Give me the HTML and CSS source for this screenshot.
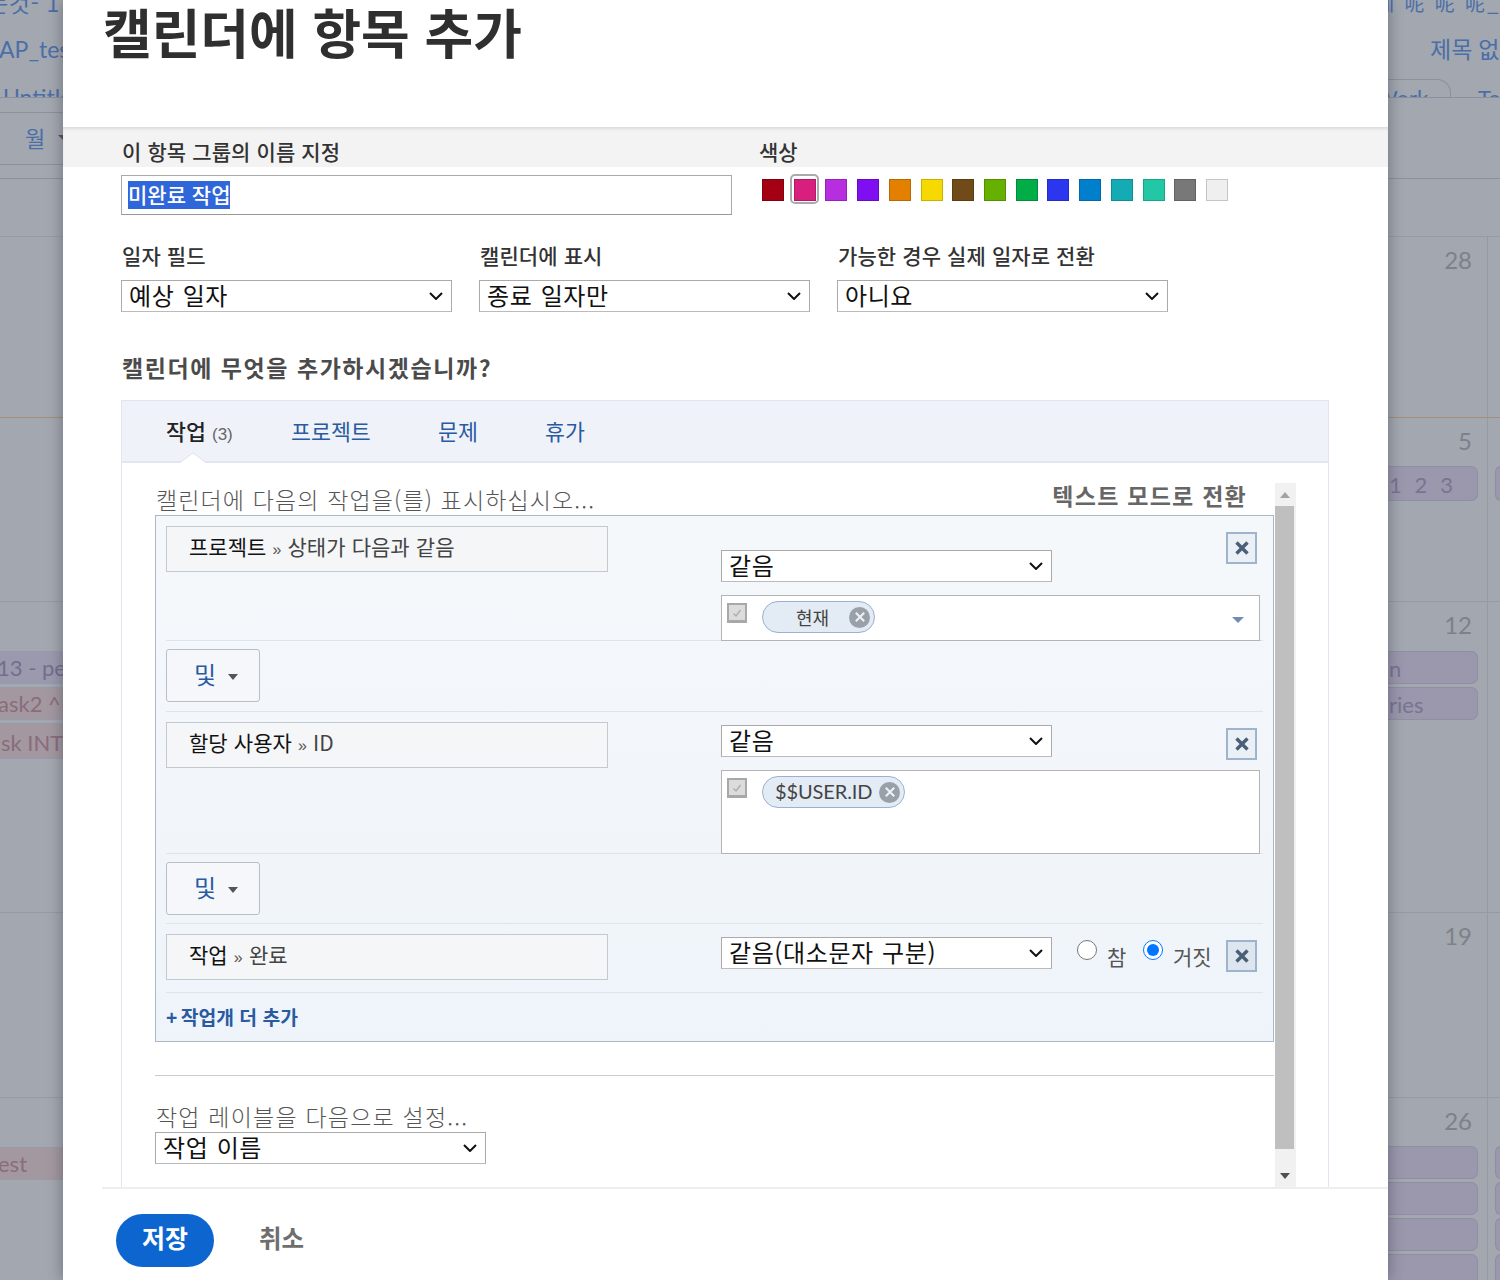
FILE: index.html
```html
<!DOCTYPE html>
<html lang="ko">
<head>
<meta charset="utf-8">
<title>캘린더에 항목 추가</title>
<link rel="stylesheet" href="styles.css">
</head>
<body>
<div class="page">
  <aside class="side side-left">
    <div class="bg-top">
      <div class="bg-link bg-l1">는것- 1</div>
      <div class="bg-link bg-l2">AP_test</div>
      <div class="bg-link bg-l3">Untitled</div>
    </div>
    <div class="bg-tool"><span class="bg-month">월</span><span class="bg-caret"></span></div>
    <div class="bg-strip"></div>
    <div class="bg-head"></div>
    <div class="week w1"></div>
    <div class="week w2"></div>
    <div class="week w3">
      <div class="wk-pad"></div>
      <div class="lpill purple">13 - pe</div>
      <div class="lpill pink">ask2 ^</div>
      <div class="lpill pink tall">sk INT</div>
    </div>
    <div class="week w4"></div>
    <div class="week w5">
      <div class="wk-pad"></div>
      <div class="lpill pink">est</div>
    </div>
  </aside>

  <main class="modal">
    <header class="modal-head"><h1 class="title">캘린더에 항목 추가</h1></header>

    <div class="band">
      <div class="band-name">이 항목 그룹의 이름 지정</div>
      <div class="band-color">색상</div>
    </div>

    <div class="name-row">
      <div class="name-input"><span class="selected-text">미완료 작업</span></div>
      <div class="swatches">
        <span class="swatch s1"></span>
        <span class="swatch s2 active"></span>
        <span class="swatch s3"></span>
        <span class="swatch s4"></span>
        <span class="swatch s5"></span>
        <span class="swatch s6"></span>
        <span class="swatch s7"></span>
        <span class="swatch s8"></span>
        <span class="swatch s9"></span>
        <span class="swatch s10"></span>
        <span class="swatch s11"></span>
        <span class="swatch s12"></span>
        <span class="swatch s13"></span>
        <span class="swatch s14"></span>
        <span class="swatch s15"></span>
      </div>
    </div>

    <div class="fields">
      <div class="field">
        <div class="field-label">일자 필드</div>
        <div class="select"><span>예상 일자</span><svg class="chev" viewBox="0 0 14 8"><path d="M1 1l6 6 6-6"/></svg></div>
      </div>
      <div class="field">
        <div class="field-label">캘린더에 표시</div>
        <div class="select"><span>종료 일자만</span><svg class="chev" viewBox="0 0 14 8"><path d="M1 1l6 6 6-6"/></svg></div>
      </div>
      <div class="field">
        <div class="field-label">가능한 경우 실제 일자로 전환</div>
        <div class="select"><span>아니요</span><svg class="chev" viewBox="0 0 14 8"><path d="M1 1l6 6 6-6"/></svg></div>
      </div>
    </div>

    <h2 class="question">캘린더에 무엇을 추가하시겠습니까?</h2>

    <section class="panel">
      <nav class="tabs">
        <span class="tab active">작업 <small>(3)</small></span>
        <a class="tab t2">프로젝트</a>
        <a class="tab t3">문제</a>
        <a class="tab t4">휴가</a>
        <svg class="notch" viewBox="0 0 26 11"><path d="M0 11L13 1l13 10z"/><path class="notch-line" d="M0 10.5L13 .8l13 9.7"/></svg>
      </nav>
      <div class="panel-body">
        <div class="scroll-content">
          <div class="intro">
            <span class="intro-text">캘린더에 다음의 작업을(를) 표시하십시오...</span>
            <a class="mode-link">텍스트 모드로 전환</a>
          </div>
          <div class="filter-box">
            <div class="cond">
              <div class="cond-name"><b>프로젝트</b> <i>»</i> 상태가 다음과 같음</div>
              <div class="cond-right">
                <div class="cond-top first">
                  <div class="select"><span>같음</span><svg class="chev" viewBox="0 0 14 8"><path d="M1 1l6 6 6-6"/></svg></div>
                  <button class="x-btn" type="button"><svg viewBox="0 0 16 16"><path d="M2.5 2.5l11 11M13.5 2.5l-11 11"/></svg></button>
                </div>
                <div class="multi">
                  <span class="check"><svg viewBox="0 0 12 12"><path d="M2.5 6.5l2.5 2.5 4.5-6"/></svg></span>
                  <span class="chip chip-wide">현재<span class="chip-x"><svg viewBox="0 0 10 10"><path d="M2 2l6 6M8 2L2 8"/></svg></span></span>
                  <span class="multi-caret"></span>
                </div>
              </div>
            </div>
            <div class="and-row"><button class="and-btn" type="button">및<span class="and-caret"></span></button></div>
            <div class="cond">
              <div class="cond-name"><b>할당 사용자</b> <i>»</i> ID</div>
              <div class="cond-right">
                <div class="cond-top">
                  <div class="select"><span>같음</span><svg class="chev" viewBox="0 0 14 8"><path d="M1 1l6 6 6-6"/></svg></div>
                  <button class="x-btn" type="button"><svg viewBox="0 0 16 16"><path d="M2.5 2.5l11 11M13.5 2.5l-11 11"/></svg></button>
                </div>
                <div class="multi multi-tall">
                  <span class="check"><svg viewBox="0 0 12 12"><path d="M2.5 6.5l2.5 2.5 4.5-6"/></svg></span>
                  <span class="chip chip-user"><span class="chip-label">$$USER.ID</span><span class="chip-x"><svg viewBox="0 0 10 10"><path d="M2 2l6 6M8 2L2 8"/></svg></span></span>
                </div>
              </div>
            </div>
            <div class="and-row and-second"><button class="and-btn" type="button">및<span class="and-caret"></span></button></div>
            <div class="cond cond-last">
              <div class="cond-name"><b>작업</b> <i>»</i> 완료</div>
              <div class="cond-right">
                <div class="cond-top">
                  <div class="select"><span>같음(대소문자 구분)</span><svg class="chev" viewBox="0 0 14 8"><path d="M1 1l6 6 6-6"/></svg></div>
                  <label class="radio r-true"><input type="radio" name="done"><span>참</span></label>
                  <label class="radio r-false"><input type="radio" name="done" checked><span>거짓</span></label>
                  <button class="x-btn x-filled" type="button"><svg viewBox="0 0 16 16"><path d="M2.5 2.5l11 11M13.5 2.5l-11 11"/></svg></button>
                </div>
              </div>
            </div>
            <div class="add-row"><a class="add-link"><span class="plus">+</span> 작업개 더 추가</a></div>
          </div>
          <div class="label-block">
            <div class="label-title">작업 레이블을 다음으로 설정...</div>
            <div class="select"><span>작업 이름</span><svg class="chev" viewBox="0 0 14 8"><path d="M1 1l6 6 6-6"/></svg></div>
          </div>
        </div>
        <div class="scrollbar">
          <span class="sb-btn"><span class="sb-up"></span></span>
          <span class="sb-thumb"></span>
          <span class="sb-btn sb-btn-down"><span class="sb-down"></span></span>
        </div>
      </div>
    </section>

    <footer class="modal-foot">
      <button class="save" type="button">저장</button>
      <a class="cancel">취소</a>
    </footer>
  </main>

  <aside class="side side-right">
    <div class="bg-top r">
      <div class="bg-link rl1">케 呢 呢 呢_</div>
      <div class="bg-link rl2">제목 없음</div>
      <div class="rtabs"><span class="rtab">Work</span><span class="rtab2">To</span></div>
    </div>
    <div class="r-tool"></div>
    <div class="bg-head"></div>
    <div class="week rw w1"><div class="day"><div class="num">28</div></div><div class="day2"></div></div>
    <div class="week rw w2"><div class="day"><div class="num first-pill">5</div><div class="rpill tall nums">1 2 3</div></div><div class="day2"><div class="num none first-pill"></div><div class="rpill2 tall"></div></div></div>
    <div class="week rw w3"><div class="day"><div class="num">12</div><div class="rpill">n</div><div class="rpill">ries</div></div><div class="day2"></div></div>
    <div class="week rw w4"><div class="day"><div class="num">19</div></div><div class="day2"></div></div>
    <div class="week rw w5"><div class="day"><div class="num first-pill">26</div><div class="rpill"></div><div class="rpill"></div><div class="rpill"></div><div class="rpill"></div></div><div class="day2"><div class="num none first-pill"></div><div class="rpill2"></div><div class="rpill2"></div><div class="rpill2"></div><div class="rpill2"></div></div></div>
  </aside>
</div>
</body>
</html>
```

FILE: styles.css
```css
* { box-sizing: border-box; }
html, body { margin: 0; padding: 0; }
body {
  width: 1500px;
  height: 1280px;
  overflow: hidden;
  font-family: "Noto Sans CJK KR", "Noto Sans", sans-serif;
  color: #333;
  background: #a3a7af;
}
button { font-family: inherit; }
.page { display: flex; width: 1500px; height: 1280px; overflow: hidden; }

/* dimmed page behind the dialog */
.side { flex: none; height: 1280px; overflow: hidden; background: #a3a7af; }
.side-left { width: 63px; }
.side-right { width: 112px; }
.bg-top { height: 113px; border-bottom: 1px solid #8b919c; overflow: hidden; }
.bg-link { white-space: nowrap; color: #4a6ea8; font-size: 23px; font-family: "Lato", "Noto Sans CJK KR", sans-serif; }
.bg-l1 { height: 22px; margin-top: -9px; line-height: 22px; margin-left: -13px; width: 80px; letter-spacing: .7px; font-family: "Noto Sans CJK KR", sans-serif; }
.bg-l2 { height: 34px; margin-top: 19px; line-height: 34px; margin-left: -1px; }
.bg-l3 { margin-top: 13px; line-height: 36px; height: 19px; overflow: hidden; padding-left: 3px; border-bottom: 1px solid #8b919c; }
.bg-tool { height: 52px; border-bottom: 1px solid #8b919c; display: flex; align-items: center; padding: 0 0 4px 25px; color: #4a6ea8; font-size: 22px; }
.bg-month { width: 33px; flex: none; }
.bg-caret { flex: none; width: 0; height: 0; border: 5px solid transparent; border-top-color: #555; margin-top: 6px; }
.bg-strip { height: 14px; border-bottom: 1px solid #8b919c; }
.bg-head { height: 58px; border-bottom: 1px solid #979ba5; }
.r-tool { height: 81px; border-bottom: 1px solid #8b919c; }
.week { border-bottom: 1px solid #969aa3; overflow: hidden; }
.week.w1 { height: 181px; border-bottom: 1px solid #a58d77; }
.w2 { height: 184px; }
.w3 { height: 311px; }
.w4 { height: 185px; }
.w5 { height: 183px; border-bottom: 0; }
.wk-pad { height: 49px; }
.lpill { height: 33px; margin-bottom: 3px; border-top: 1px solid #979aab; border-bottom: 1px solid #979aab; font-size: 22px; line-height: 31px; white-space: nowrap; overflow: hidden; font-family: "Lato", sans-serif; }
.lpill.purple { background: #9b99ae; color: #716f8c; text-indent: -3px; }
.lpill.pink { background: #a3989f; color: #8a6c7c; text-indent: -2px; }
.lpill.tall { height: 36px; margin-top: 2px; line-height: 37px; text-indent: 1px; }

.side-right .bg-top { height: 98px; }
.rl1 { height: 22px; margin-top: -8px; line-height: 22px; font-size: 20px; letter-spacing: 2.3px; text-indent: -12px; font-family: "Noto Sans CJK KR", sans-serif; }
.rl2 { margin-top: 18px; height: 34px; line-height: 34px; text-indent: 42px; }
.rtabs { display: flex; height: 18px; margin-top: 13px; overflow: hidden; }
.rtab { width: 63px; height: 30px; border: 1px solid #8b919c; border-left: 0; border-radius: 0 14px 0 0; font: 22px/36px "Lato", sans-serif; color: #4a6ea8; text-indent: -13px; flex: none; overflow: hidden; }
.rtab2 { font: 22px/38px "Lato", sans-serif; color: #4a6ea8; padding-left: 27px; flex: none; }
.rw { display: flex; }
.day { width: 100px; flex: none; border-right: 1px solid #959aa3; padding-right: 9px; height: 100%; }
.day2 { flex: 1; padding-left: 7px; }
.num { height: 49px; text-align: right; padding-right: 6px; color: #7d8189; font: 24px/46px "Lato", sans-serif; }
.num.first-pill { height: 48px; }
.num.none { visibility: hidden; }
.rpill { height: 33px; margin-bottom: 3px; background: #9b97ac; border: 1px solid #908da4; border-left: 0; border-radius: 0 7px 7px 0; color: #777591; font: 22px/33px "Lato", sans-serif; white-space: nowrap; text-indent: 1px; overflow: hidden; }
.rpill.tall { height: 35px; line-height: 36px; }
.rpill.nums { letter-spacing: 2.6px; text-indent: 1px; word-spacing: 2px; }
.rpill2 { height: 33px; margin-bottom: 3px; background: #9b97ac; border: 1px solid #908da4; border-right: 0; border-radius: 7px 0 0 7px; }
.rpill2.tall { height: 35px; }

/* dialog */
.modal { flex: none; width: 1325px; height: 1280px; background: #fff; position: relative; z-index: 1; box-shadow: 0 0 14px rgba(40, 45, 60, .45); overflow: hidden; display: flex; flex-direction: column; }
.modal-head { height: 127px; flex: none; padding: 0 0 0 40px; }
.title { margin: 0; font-size: 52.9px; line-height: 63px; font-weight: 700; color: #2f2f2f; white-space: nowrap; }

.band { height: 40px; flex: none; background: #f3f3f3; display: flex; align-items: center; padding-left: 59px; font-size: 21px; font-weight: 500; color: #333; box-shadow: inset 0 3px 3px -1px #dcdcdc; padding-top: 8px; }
.band-name { width: 637px; flex: none; letter-spacing: .1px; }

.name-row { height: 50px; flex: none; display: flex; padding: 8px 0 0 58px; }
.name-input { width: 611px; height: 40px; border: 1px solid #aaa; border-bottom-color: #999; flex: none; padding: 5px 0 0 6px; line-height: 28px; font-size: 21px; }
.selected-text { display: inline-block; height: 28px; width: 102px; padding-left: 0; background: #2f66d9; color: #fff; line-height: 27px; white-space: nowrap; overflow: hidden; vertical-align: top; font-weight: 500; }
.swatches { display: flex; flex: none; padding: 4px 0 0 30px; height: 30px; gap: 9.72px; }
.swatch { width: 22px; height: 22px; flex: none; border: 1px solid rgba(0, 0, 0, .18); position: relative; }
.swatch.active::after { content: ""; position: absolute; left: -5px; top: -6px; width: 25px; height: 26px; border: 2px solid #aaa; border-radius: 5px; }
.s1 { background: #a30013; } .s2 { background: #d91f7d; } .s3 { background: #b72de0; }
.s4 { background: #7f0ef0; } .s5 { background: #e38000; } .s6 { background: #f5d900; }
.s7 { background: #704a18; } .s8 { background: #66b000; } .s9 { background: #00ad47; }
.s10 { background: #2b36ef; } .s11 { background: #0080cc; } .s12 { background: #14abb5; }
.s13 { background: #22c7a5; } .s14 { background: #787878; } .s15 { background: #efefef; }

.fields { flex: none; display: flex; gap: 27px; padding: 21px 0 0 58px; height: 95px; }
.field { width: 331px; flex: none; }
.field-label { height: 42px; font-size: 21px; font-weight: 500; line-height: 35px; padding-left: 1px; white-space: nowrap; color: #333; letter-spacing: .1px; }
.select { width: 331px; height: 32px; flex: none; display: flex; align-items: center; justify-content: space-between; background: #fff; border: 1px solid #aaa; border-bottom-color: #bbb; padding: 0 8px 3px 7px; font-size: 24px; font-weight: 400; line-height: 28px; letter-spacing: .6px; word-spacing: 1px; color: #111; white-space: nowrap; }
.chev { width: 14px; height: 8px; fill: none; stroke: #111; stroke-width: 2; flex: none; margin-top: 3px; }

.question { margin: 0; flex: none; padding: 35px 0 0 59px; height: 88px; font-size: 23px; line-height: 40px; font-weight: 700; color: #4b4b4b; letter-spacing: 1.55px; white-space: nowrap; }

.panel { margin-left: 58px; width: 1208px; flex: 1; min-height: 0; border: 1px solid #dfe6ef; border-bottom: 0; display: flex; flex-direction: column; }
.tabs { height: 62px; flex: none; background: #eff3f9; border-bottom: 2px solid #e1e7ef; display: flex; align-items: center; padding: 0 0 2px 44px; font-size: 21.7px; position: relative; }
.tab { color: #2a5aa0; white-space: nowrap; }
.tab.active { color: #222; font-weight: 500; width: 125px; }
.tab small { font-size: 17px; color: #666; font-weight: 400; font-family: "Liberation Sans", sans-serif; }
.t2 { width: 147px; }
.t3 { width: 107px; }
.notch { position: absolute; left: 58px; bottom: -2px; width: 26px; height: 11px; fill: #fff; }
.notch .notch-line { fill: none; stroke: #dde3ec; }

.panel-body { flex: 1; min-height: 0; display: flex; padding-left: 33px; overflow: hidden; }
.scroll-content { width: 1119px; flex: none; }
.intro { height: 52px; display: flex; justify-content: space-between; padding-right: 27px; position: relative; }
.intro-text { font-size: 23px; font-weight: 300; line-height: 30px; padding-top: 21px; color: #555; letter-spacing: 1.13px; white-space: nowrap; padding-left: 1px; }
.mode-link { font-size: 23px; font-weight: 700; color: #666; line-height: 30px; padding-top: 17px; letter-spacing: 1.25px; white-space: nowrap; }

.filter-box { height: 527px; border: 1px solid #a9b9c9; background: linear-gradient(#f5f8fb, #eff4fa); padding: 0 10px; }
.cond { display: grid; grid-template-columns: 442px 539px; column-gap: 113px; padding-top: 10px; border-bottom: 1px solid #dde5ec; align-items: start; }
.cond-last { height: 69px; }
.cond-name { height: 46px; border: 1px solid #c3c9d0; background: #f5f6f8; padding-left: 22px; font-size: 21px; line-height: 38px; color: #444; white-space: nowrap; word-spacing: .3px; }
.cond-name b { font-weight: 400; color: #111; }
.cond-name i { font-style: normal; font-size: 16px; color: #555; font-family: "Liberation Sans", sans-serif; }
.cond-right { min-width: 0; }
.cond-top { display: flex; height: 35px; margin-top: 3px; align-items: flex-start; margin-bottom: 10px; }
.cond-top.first { margin-top: 24px; margin-bottom: 13px; height: 32px; }
.cond-top .x-btn { margin-left: auto; margin-right: 3px; margin-top: 3px; }
.cond-top.first .x-btn { margin-top: -18px; }
.x-btn { width: 31px; height: 32px; padding: 0; flex: none; border: 2px solid #9db4cc; background: #eaf0f6; display: flex; align-items: center; justify-content: center; }
.x-btn svg { width: 16px; height: 16px; fill: none; stroke: #4a5f76; stroke-width: 3.4; }
.x-filled { background: #dde6ef; }

.multi { height: 46px; border: 1px solid #b4b4b4; background: #fff; display: flex; align-items: flex-start; padding: 5px 0 0 5px; position: relative; margin-bottom: -1px; }
.multi-tall { height: 84px; }
.check { width: 20px; height: 20px; flex: none; margin-top: 2px; border: 2px solid #a8a8a8; border-bottom-width: 3px; background: #dcdcdc; display: flex; align-items: center; justify-content: center; }
.check svg { width: 12px; height: 12px; fill: none; stroke: #a9b0a9; stroke-width: 1.4; }
.chip { margin-left: 15px; height: 32px; border: 1px solid #9cb0d2; border-radius: 16px; background: #e3ebf5; display: flex; align-items: center; white-space: nowrap; color: #444; flex: none; }
.chip-wide { width: 113px; font-size: 18px; padding-left: 33px; }
.chip-user { width: 143px; padding-left: 12px; font: 20px "Lato", sans-serif; letter-spacing: -.1px; }
.chip-label { margin-top: -3px; }
.chip-x { margin-left: auto; margin-right: 4px; width: 21px; height: 21px; border-radius: 50%; background: #9aa0aa; display: flex; align-items: center; justify-content: center; flex: none; }
.chip-x svg { width: 14px; height: 14px; fill: none; stroke: #eef0f4; stroke-width: 1.5; }
.multi-caret { margin-left: auto; margin-right: 15px; margin-top: 16px; width: 0; height: 0; border: 6px solid transparent; border-top: 6px solid #6f8db5; border-bottom: 0; }

.and-row { height: 71px; padding-top: 8px; border-bottom: 1px solid #dde5ec; }
.and-second { height: 70px; }
.and-btn { width: 94px; height: 53px; border: 1px solid #b9bfc7; border-radius: 3px; background: #f5f7fa; color: #2a5aa0; font-size: 24px; padding: 0 0 5px 6px; display: flex; align-items: center; justify-content: center; gap: 12px; }
.and-caret { width: 0; height: 0; border: 5px solid transparent; border-top: 6px solid #555; border-bottom: 0; margin-top: 8px; }

.radio { display: flex; align-items: flex-start; flex: none; font-size: 21px; color: #555; height: 32px; }
.radio input { width: 20px; height: 20px; margin: 3px 10px 0 0; flex: none; }
.radio span { padding-top: 4px; line-height: 30px; white-space: nowrap; }
.r-true { margin-left: 25px; width: 66px; }
.r-false { width: 83px; }
.cond-top .x-filled { margin-left: 0; margin-top: 3px; }

.add-row { height: 48px; padding-top: 7px; }
.add-link { color: #2a5aa0; font-size: 19.3px; font-weight: 700; line-height: 34px; white-space: nowrap; }
.plus { font-family: "Liberation Sans", sans-serif; margin-right: -2px; }

.label-block { margin-top: 33px; border-top: 1px solid #ccc; height: 100px; padding-top: 25px; }
.label-title { height: 31px; font-size: 23px; font-weight: 300; line-height: 30px; color: #555; letter-spacing: 1.2px; padding-left: 1px; white-space: nowrap; }

.scrollbar { width: 21px; flex: none; background: #f1f1f1; margin-left: 1px; margin-top: 20px; display: flex; flex-direction: column; align-items: flex-start; }
.sb-btn { height: 23px; width: 20px; flex: none; display: flex; align-items: center; justify-content: center; }
.sb-btn-down { height: 38px; align-items: flex-end; padding-bottom: 8px; }
.sb-up { width: 0; height: 0; border: 5px solid transparent; border-bottom: 6px solid #a3a3a3; border-top: 0; }
.sb-down { width: 0; height: 0; border: 5px solid transparent; border-top: 6px solid #505050; border-bottom: 0; }
.sb-thumb { width: 19px; height: 643px; flex: none; background: #bfbfbf; margin-left: 0; }

.modal-foot { height: 93px; flex: none; margin-left: 39px; border-top: 2px solid #eee; display: flex; align-items: flex-start; padding: 25px 0 0 14px; }
.save { width: 98px; height: 53px; border: 0; border-radius: 27px; background: #0d66d0; color: #fff; font-size: 25px; font-weight: 700; padding: 0 0 8px; }
.cancel { margin-left: 45px; font-size: 24.5px; font-weight: 700; color: #6e6e6e; line-height: 47px; }
```
